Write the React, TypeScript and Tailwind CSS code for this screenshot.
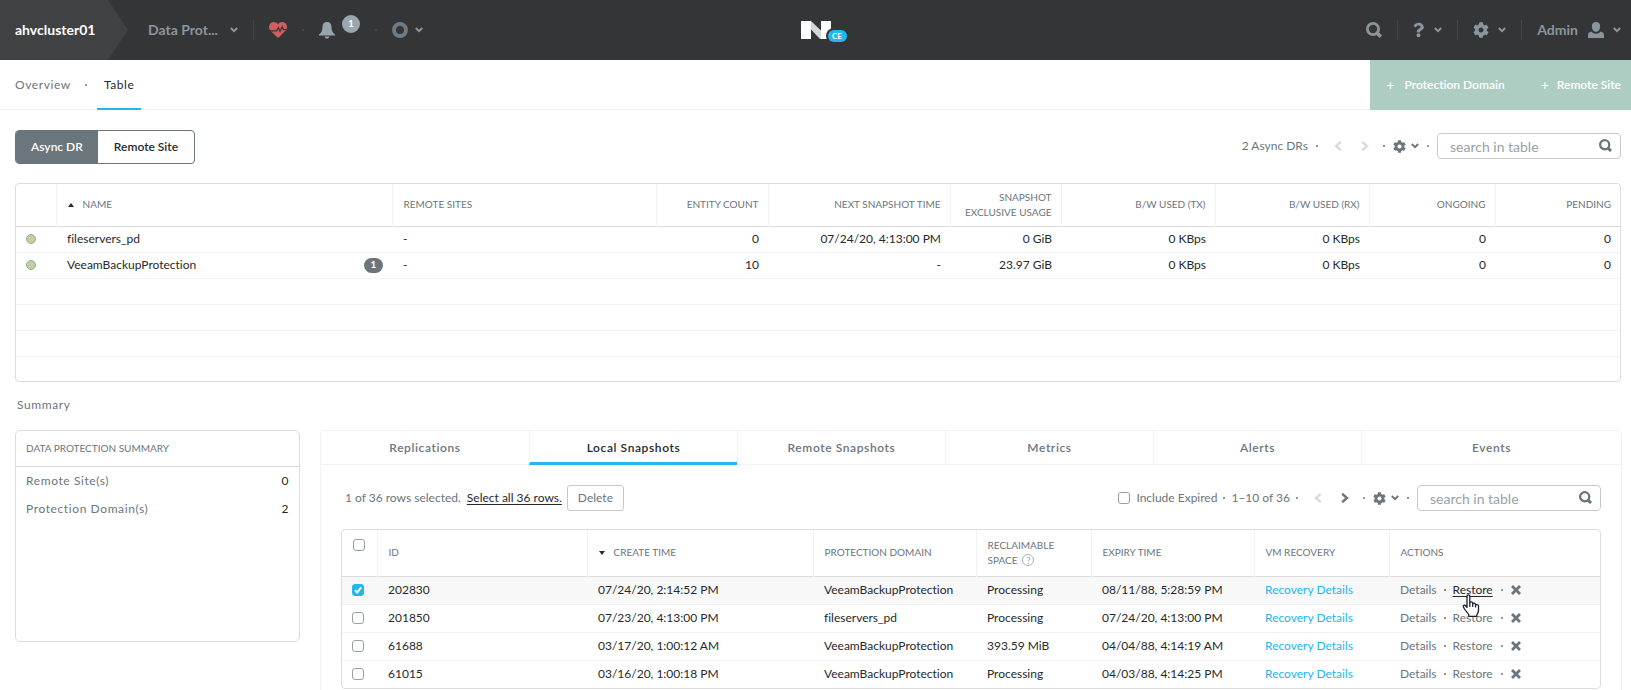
import React from 'react';
import { FaCog, FaQuestion } from 'react-icons/fa';
import clsx from 'clsx';

interface IconProps {
  className?: string;
}

const ChevronDown: React.FC<IconProps> = ({ className }) => (
  <svg viewBox="0 0 8 6" className={clsx('h-[6px] w-2 shrink-0', className)} fill="none" stroke="currentColor" strokeWidth="2">
    <path d="M0.8 1 L4 4.2 L7.2 1" />
  </svg>
);

const Arrow: React.FC<{ dir: 'left' | 'right'; className?: string }> = ({ dir, className }) => (
  <svg viewBox="0 0 8 10" className={clsx('h-[10px] w-2', className)} fill="none" stroke="currentColor" strokeWidth="2.4">
    <path d={dir === 'left' ? 'M6.8 0.8 L2 5 L6.8 9.2' : 'M1.2 0.8 L6 5 L1.2 9.2'} />
  </svg>
);

const SearchIcon: React.FC<IconProps> = ({ className }) => (
  <svg viewBox="0 0 16 16" className={className} fill="none" stroke="currentColor">
    <circle cx="7" cy="7" r="5.6" strokeWidth="2.8" />
    <path d="M10.6 10.6 L14.8 14.8" strokeWidth="3.6" />
  </svg>
);

const HeartIcon: React.FC<IconProps> = ({ className }) => (
  <svg viewBox="0 0 18 16" className={className}>
    <path
      fill="currentColor"
      d="M9 16 L1.3 8.6 C-0.6 6.4 -0.3 3 1.6 1.2 C3.8 -0.6 7.2 -0.3 9 2.2 C10.8 -0.3 14.2 -0.6 16.4 1.2 C18.3 3 18.6 6.4 16.7 8.6 Z"
    />
    <path d="M1 8.8 H7.6 L9.4 5.6 L11 9.6 L13.2 4.8 L14.4 7.6 H17" fill="none" stroke="#343537" strokeWidth="1.2" />
  </svg>
);

const BellIcon: React.FC<IconProps> = ({ className }) => (
  <svg viewBox="0 0 16 17" className={className} fill="currentColor">
    <path d="M8 0 C5 0 3.6 2 3.5 4.8 C3.4 8.4 2.8 10.6 0 12.6 V13.6 H16 V12.6 C13.2 10.6 12.6 8.4 12.5 4.8 C12.4 2 11 0 8 0 Z" />
    <path d="M5.6 14.6 H10.4 C10.2 16 9.3 16.6 8 16.6 C6.7 16.6 5.8 16 5.6 14.6 Z" />
  </svg>
);

const UserIcon: React.FC<IconProps> = ({ className }) => (
  <svg viewBox="0 0 16 16" className={className} fill="currentColor">
    <path d="M8 0 C10.8 0 12.2 1.8 12.1 4.4 C12 7.6 10.2 9.8 8 9.8 C5.8 9.8 4 7.6 3.9 4.4 C3.8 1.8 5.2 0 8 0 Z" />
    <path d="M3.4 9.6 C5.6 12.6 10.4 12.6 12.6 9.6 C14.8 10.2 16 11.2 16 13.2 V16 H0 V13.2 C0 11.2 1.2 10.2 3.4 9.6 Z" />
  </svg>
);

const CloseIcon: React.FC<IconProps> = ({ className }) => (
  <svg viewBox="0 0 10 10" className={className} fill="none" stroke="currentColor" strokeWidth="2.8">
    <path d="M1 1 L9 9 M9 1 L1 9" />
  </svg>
);

const Logo = () => (
  <div className="relative h-[18px] w-[30px]">
    <svg viewBox="0 0 30 18" className="h-[18px] w-[30px]">
      <path d="M0 0 H10 V18 H0 Z M20 0 H30 V18 H20 Z" fill="#fff" />
      <path d="M10 0 L20 9.5 V18 H19 L10 8.5 Z" fill="#d4d5d6" />
    </svg>
    <span className="absolute -right-4 -bottom-[3px] flex h-3 w-[19px] items-center justify-center rounded-full bg-[#24b6ed] text-[8px] font-bold text-white ring-2 ring-[#343537]">
      CE
    </span>
  </div>
);

const Dot: React.FC<IconProps> = ({ className }) => (
  <span className={clsx('size-[2px] shrink-0 rounded-full bg-current', className)} />
);

const Divider = () => <span className="h-5 w-px bg-[#45474a]" />;

const boxClass =
  'block size-3 shrink-0 appearance-none rounded-[3px] border border-[#95a1a9] bg-white checked:border-[#24b6ed] checked:bg-[#24b6ed]';

const CheckBox: React.FC<{ id: string; label?: string; checked?: boolean }> = ({ id, label, checked = false }) => (
  <span className="relative block size-3">
    <input id={id} type="checkbox" defaultChecked={checked} aria-label={label} className={boxClass} />
    {checked && (
      <svg viewBox="0 0 12 12" className="pointer-events-none absolute inset-0 size-3" fill="none" stroke="#fff" strokeWidth="2">
        <path d="M3 6.2 L5.2 8.4 L9.2 3.4" />
      </svg>
    )}
  </span>
);

const TableSettings = () => (
  <button aria-label="Table settings" className="flex items-center gap-[5px] text-[#6b757c]">
    <FaCog className="size-[13px]" />
    <ChevronDown />
  </button>
);

const SearchBox: React.FC<{ id: string }> = ({ id }) => (
  <div className="relative">
    <input
      id={id}
      type="text"
      aria-label="search in table"
      placeholder="search in table"
      className="block h-[26px] w-[184px] rounded border border-[#c6cacd] pr-8 pl-3 text-sm text-[#333] placeholder:text-[#98a2a9]"
    />
    <SearchIcon className="absolute top-[6px] right-[9px] size-[13px] text-[#6b757c]" />
  </div>
);

const domainColumns = [
  { title: 'REMOTE SITES', width: 'w-[264px]' },
  { title: 'ENTITY COUNT', width: 'w-[112px]' },
  { title: 'NEXT SNAPSHOT TIME', width: 'w-[182px]' },
  { title: 'SNAPSHOT EXCLUSIVE USAGE', width: 'w-[111px]' },
  { title: 'B/W USED (TX)', width: 'w-[154px]' },
  { title: 'B/W USED (RX)', width: 'w-[154px]' },
  { title: 'ONGOING', width: 'w-[126px]' },
  { title: 'PENDING', width: 'w-[125px]' },
];

const domains = [
  { name: 'fileservers_pd', alerts: 0, cells: ['-', '0', '07/24/20, 4:13:00 PM', '0 GiB', '0 KBps', '0 KBps', '0', '0'] },
  { name: 'VeeamBackupProtection', alerts: 1, cells: ['-', '10', '-', '23.97 GiB', '0 KBps', '0 KBps', '0', '0'] },
];

const emptyRows = [1, 2, 3, 4];

const snapshots = [
  { id: '202830', created: '07/24/20, 2:14:52 PM', domain: 'VeeamBackupProtection', space: 'Processing', expiry: '08/11/88, 5:28:59 PM' },
  { id: '201850', created: '07/23/20, 4:13:00 PM', domain: 'fileservers_pd', space: 'Processing', expiry: '07/24/20, 4:13:00 PM' },
  { id: '61688', created: '03/17/20, 1:00:12 AM', domain: 'VeeamBackupProtection', space: '393.59 MiB', expiry: '04/04/88, 4:14:19 AM' },
  { id: '61015', created: '03/16/20, 1:00:18 PM', domain: 'VeeamBackupProtection', space: 'Processing', expiry: '04/03/88, 4:14:25 PM' },
];

const tabs = ['Replications', 'Local Snapshots', 'Remote Snapshots', 'Metrics', 'Alerts', 'Events'];

const TopBar = () => (
  <header className="grid h-[60px] grid-cols-[1fr_auto_1fr] items-center bg-[#343537] text-[#8b959c]">
    <div className="flex h-full items-center">
      <div className="flex h-full w-32 items-center bg-[#404143] pl-[15px] text-sm font-bold text-white [clip-path:polygon(0_0,108px_0,100%_50%,108px_100%,0_100%)]">
        ahvcluster01
      </div>
      <button className="ml-5 flex items-center gap-3 text-sm font-bold">
        Data Prot...
        <ChevronDown />
      </button>
      <div className="ml-[15px] flex items-center gap-[15px]">
        <Divider />
        <HeartIcon className="h-4 w-[18px] text-[#d05f63]" />
        <Dot className="text-[#4a4c4f]" />
        <button aria-label="Alerts" className="flex items-center gap-[7px]">
          <BellIcon className="h-[17px] w-4 text-[#97a4ac]" />
          <span className="mb-3 flex size-[18px] items-center justify-center rounded-full bg-[#9aa7af] text-[10px] font-bold text-white">
            1
          </span>
        </button>
        <Dot className="text-[#4a4c4f]" />
        <button aria-label="Tasks" className="flex items-center gap-[7px]">
          <span className="size-4 rounded-full border-4 border-[#6f7a82]" />
          <ChevronDown />
        </button>
      </div>
    </div>
    <Logo />
    <div className="flex items-center justify-end gap-[15px] pr-[10px]">
      <button aria-label="Search">
        <SearchIcon className="size-4" />
      </button>
      <Divider />
      <button aria-label="Help" className="flex items-center gap-[10px]">
        <FaQuestion className="h-4 w-[11px]" />
        <ChevronDown />
      </button>
      <Divider />
      <button aria-label="Settings" className="flex items-center gap-[9px]">
        <FaCog className="size-4" />
        <ChevronDown />
      </button>
      <Divider />
      <button className="flex items-center text-sm font-bold">
        Admin
        <UserIcon className="mr-[9px] ml-[10px] size-4" />
        <ChevronDown />
      </button>
    </div>
  </header>
);

const SubNav = () => (
  <nav className="flex h-[50px] border-b border-[#f1f2f3] pl-[15px] text-xs tracking-wider">
    <a href="#overview" className="flex items-center text-[#6b757c]">
      Overview
    </a>
    <Dot className="mr-[10px] ml-[14px] self-center text-[#6b757c]" />
    <a href="#table" className="-mb-px flex items-center border-b-2 border-[#24b6ed] px-[7px] pt-[2px] text-[#26292b]">
      Table
    </a>
    <div className="-mb-px ml-auto flex items-center gap-9 bg-[#aecdc2] pr-[10px] pl-4 font-semibold tracking-normal text-white">
      <button className="flex items-center gap-[10px]">
        <span className="text-sm font-normal">+</span>
        Protection Domain
      </button>
      <button className="flex items-center gap-2">
        <span className="text-sm font-normal">+</span>
        Remote Site
      </button>
    </div>
  </nav>
);

const DomainTable = () => (
  <div className="rounded border border-[#dadddf]">
    <table className="w-full table-fixed text-xs text-[#26292b]">
      <thead>
        <tr className="h-[42px] text-[10px] text-[#6b757c]">
          <th className="w-10" aria-label="Status" />
          <th className="w-[336px] border-l border-[#f1f2f3] pr-[9px] pl-[11px] text-left font-normal">
            <span className="flex items-center gap-[9px]">
              <svg viewBox="0 0 6 4" className="h-1 w-[6px]">
                <path d="M0 4 L3 0 L6 4 Z" fill="#26292b" />
              </svg>
              NAME
            </span>
          </th>
          {domainColumns.map((col, i) => (
            <th
              key={col.title}
              className={clsx('border-l border-[#f1f2f3] pr-[9px] pl-[11px] leading-[15px] font-normal', col.width, i === 0 ? 'text-left' : 'text-right')}
            >
              {col.title}
            </th>
          ))}
        </tr>
      </thead>
      <tbody className="border-t border-[#dadddf]">
        {domains.map((row) => (
          <tr key={row.name} className="h-[26px] border-b border-[#f1f2f3]">
            <td className="pl-[10px]">
              <span className="block size-[10px] rounded-full border border-[#9aa7a5] bg-[#bfd29b]" />
            </td>
            <td className="pr-[9px] pl-[11px]">
              <div className="flex items-center justify-between">
                {row.name}
                {row.alerts > 0 && (
                  <span className="flex h-[15px] w-[19px] items-center justify-center rounded-full bg-[#6b757c] text-[10px] font-bold text-white">
                    {row.alerts}
                  </span>
                )}
              </div>
            </td>
            {row.cells.map((cell, i) => (
              <td key={i} className={clsx('pr-[9px] pl-[11px]', i > 0 && 'text-right')}>
                {cell}
              </td>
            ))}
          </tr>
        ))}
        {emptyRows.map((n) => (
          <tr key={n} className="h-[26px] border-b border-[#f1f2f3] last:h-[25px] last:border-b-0">
            <td colSpan={10} />
          </tr>
        ))}
      </tbody>
    </table>
  </div>
);

// Pointing hand shown over the hovered "Restore" link
const HandCursor = () => (
  <svg viewBox="0 0 18 24" className="pointer-events-none absolute top-3 left-[9px] z-10 h-6 w-[18px]">
    <path
      d="M5 2.2 C5 0.4 7.8 0.4 7.8 2.2 V9 C7.9 7.6 10.6 7.6 10.7 9.2 V10 C10.9 8.8 13.4 8.9 13.5 10.4 V11.2 C13.8 10.2 16.4 10.3 16.5 12 V16.4 C16.5 18.6 15 19.8 14.8 21 V22.4 H6.8 V21 C6.6 19.4 4 17.6 2.4 14.8 C1.6 13.6 0.8 12.8 1.2 11.8 C1.8 10.8 3.2 11.2 3.8 12 L5 13.4 Z"
      fill="#fff"
      stroke="#1c1f2e"
      strokeWidth="1.3"
      strokeLinejoin="round"
    />
    <path d="M7.8 9 V13 M10.7 10 V13 M13.5 11 V13.4" stroke="#1c1f2e" strokeWidth="1.2" fill="none" />
  </svg>
);

const SnapshotTable = () => (
  <div className="rounded border border-[#dadddf]">
    <table className="w-full table-fixed text-xs text-[#26292b]">
      <thead>
        <tr className="h-[46px] text-left text-[10px] text-[#6b757c] [&>th]:font-normal [&>th+th]:border-l [&>th+th]:border-[#f1f2f3] [&>th+th]:pr-[9px] [&>th+th]:pl-[11px]">
          <th className="w-[35px] pt-[9px] pl-[11px] align-top">
            <CheckBox id="all-rows" label="Select all rows" />
          </th>
          <th className="w-[210px]">ID</th>
          <th className="w-[226px]">
            <span className="flex items-center gap-[9px]">
              <svg viewBox="0 0 6 4" className="h-1 w-[6px]">
                <path d="M0 0 L3 4 L6 0 Z" fill="#26292b" />
              </svg>
              CREATE TIME
            </span>
          </th>
          <th className="w-[163px]">PROTECTION DOMAIN</th>
          <th className="w-[115px] leading-[15px]">
            RECLAIMABLE
            <span className="flex items-center gap-[5px]">
              SPACE
              <span className="flex size-3 items-center justify-center rounded-full border border-[#a8b1b7] text-[9px] text-[#95a1a9]">?</span>
            </span>
          </th>
          <th className="w-[163px]">EXPIRY TIME</th>
          <th className="w-[135px]">VM RECOVERY</th>
          <th className="w-[211px]">ACTIONS</th>
        </tr>
      </thead>
      <tbody className="border-t border-[#dadddf]">
        {snapshots.map((row, i) => (
          <tr
            key={row.id}
            className={clsx('h-7 border-b border-[#f1f2f3] last:border-b-0 [&>td+td]:pr-[9px] [&>td+td]:pl-[11px]', i === 0 && 'bg-[#f8f8f8]')}
          >
            <td className="pl-[10px]">
              <CheckBox id={`row-${row.id}`} label={`Select ${row.id}`} checked={i === 0} />
            </td>
            <td>{row.id}</td>
            <td>{row.created}</td>
            <td>{row.domain}</td>
            <td>{row.space}</td>
            <td>{row.expiry}</td>
            <td>
              <a href="#recovery" className="text-[#24b6ed]">
                Recovery Details
              </a>
            </td>
            <td>
              <div className="flex items-center text-[#6b757c]">
                <a href="#details">Details</a>
                <Dot className="mx-[7px]" />
                <span className="relative">
                  <a href="#restore" className={clsx(i === 0 && 'text-[#26292b] underline underline-offset-2')}>
                    Restore
                  </a>
                  {i === 0 && <HandCursor />}
                </span>
                <Dot className="mx-2" />
                <button aria-label="Delete snapshot">
                  <CloseIcon className="size-[10px]" />
                </button>
              </div>
            </td>
          </tr>
        ))}
      </tbody>
    </table>
  </div>
);

const App: React.FC = () => {
  return (
    <div className="flex min-h-screen flex-col bg-white font-[Lato,sans-serif] text-xs text-[#26292b] [font-variant-ligatures:none]">
      <TopBar />
      <SubNav />

      <main className="flex flex-1 flex-col pr-[10px] pl-[15px]">
        <div className="flex items-center justify-between pt-5 pb-[19px]">
          <div className="flex h-[34px] overflow-hidden rounded border border-[#6b757c] font-semibold">
            <button className="bg-[#6b757c] px-[15px] text-white">Async DR</button>
            <button className="px-4">Remote Site</button>
          </div>
          <div className="mb-[2px] flex items-center text-[#6b757c]">
            <span>2 Async DRs</span>
            <Dot className="mr-4 ml-2" />
            <div className="flex gap-[19px] text-[#d9dcde]">
              <button aria-label="Previous page"><Arrow dir="left" /></button>
              <button aria-label="Next page"><Arrow dir="right" /></button>
            </div>
            <Dot className="mr-2 ml-[14px]" />
            <TableSettings />
            <Dot className="mx-2" />
            <SearchBox id="domain-search" />
          </div>
        </div>

        <DomainTable />

        <h2 className="mt-[15px] pl-[2px] leading-4 tracking-wider text-[#6b757c]">Summary</h2>

        <div className="mt-[17px] flex flex-1 gap-5">
          <section className="h-[212px] w-[285px] shrink-0 rounded-[5px] border border-[#dadddf]">
            <h3 className="flex h-9 items-center border-b border-[#dadddf] px-[10px] text-[10px] text-[#6b757c]">DATA PROTECTION SUMMARY</h3>
            <dl className="px-[10px] tracking-wider text-[#6b757c]">
              <div className="flex h-7 items-center justify-between">
                <dt>Remote Site(s)</dt>
                <dd className="text-[#26292b]">0</dd>
              </div>
              <div className="flex h-7 items-center justify-between">
                <dt>Protection Domain(s)</dt>
                <dd className="text-[#26292b]">2</dd>
              </div>
            </dl>
          </section>

          <section className="flex-1 rounded-t-[5px] border border-b-0 border-[#f1f2f3]">
            <div className="grid h-[34px] grid-cols-[repeat(5,16%)_1fr] border-b border-[#f1f2f3] font-semibold tracking-wider text-[#6b757c]">
              {tabs.map((tab, i) => (
                <button
                  key={tab}
                  className={clsx(
                    '-mb-px border-[#f1f2f3]',
                    i > 0 && 'border-l',
                    i === 1 && 'border-b-3 border-b-[#24b6ed] pt-[3px] text-[#26292b]',
                  )}
                >
                  {tab}
                </button>
              ))}
            </div>

            <div className="px-5">
              <div className="flex items-center justify-between pt-5 pb-[18px] pl-1 text-[#6b757c]">
                <div className="flex items-center">
                  <span>1 of 36 rows selected.</span>
                  <a href="#select-all" className="ml-[6px] text-[#26292b] underline underline-offset-2">
                    Select all 36 rows.
                  </a>
                  <button className="ml-[5px] h-[26px] rounded-[3px] border border-[#c6cacd] px-[10px]">Delete</button>
                </div>
                <div className="flex items-center">
                  <CheckBox id="include-expired" />
                  <label htmlFor="include-expired" className="ml-[6px]">
                    Include Expired
                  </label>
                  <Dot className="mx-[6px]" />
                  <span>1–10 of 36</span>
                  <Dot className="mr-4 ml-[6px]" />
                  <div className="flex gap-[19px]">
                    <button aria-label="Previous page" className="text-[#d9dcde]"><Arrow dir="left" /></button>
                    <button aria-label="Next page"><Arrow dir="right" /></button>
                  </div>
                  <Dot className="mr-2 ml-[14px]" />
                  <TableSettings />
                  <Dot className="mx-2" />
                  <SearchBox id="snapshot-search" />
                </div>
              </div>

              <SnapshotTable />
            </div>
          </section>
        </div>
      </main>
    </div>
  );
};

export default App;
